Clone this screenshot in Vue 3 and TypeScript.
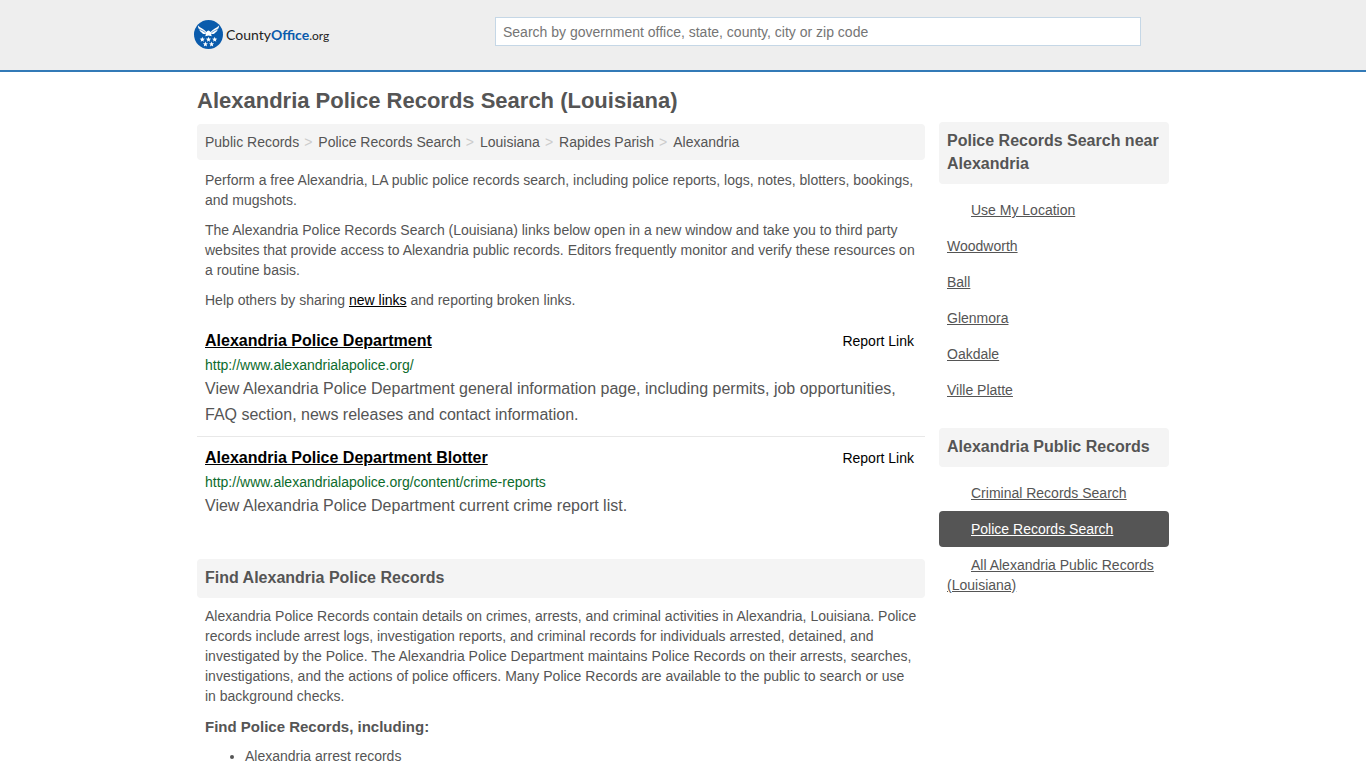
<script setup lang="ts">
interface Crumb {
  label: string
  href: string
}
interface Entry {
  title: string
  url: string
  text: string
}
interface SideLink {
  label: string
  indented?: boolean
  active?: boolean
}
interface SideBlock {
  title: string
  links: SideLink[]
}

const crumbs: Crumb[] = [
  { label: 'Public Records', href: '#public-records' },
  { label: 'Police Records Search', href: '#police-records' },
  { label: 'Louisiana', href: '#louisiana' },
  { label: 'Rapides Parish', href: '#rapides-parish' },
  { label: 'Alexandria', href: '#alexandria' },
]

const entries: Entry[] = [
  {
    title: 'Alexandria Police Department',
    url: 'http://www.alexandrialapolice.org/',
    text: 'View Alexandria Police Department general information page, including permits, job opportunities, FAQ section, news releases and contact information.',
  },
  {
    title: 'Alexandria Police Department Blotter',
    url: 'http://www.alexandrialapolice.org/content/crime-reports',
    text: 'View Alexandria Police Department current crime report list.',
  },
]

const blocks: SideBlock[] = [
  {
    title: 'Police Records Search near Alexandria',
    links: [
      { label: 'Use My Location', indented: true },
      { label: 'Woodworth' },
      { label: 'Ball' },
      { label: 'Glenmora' },
      { label: 'Oakdale' },
      { label: 'Ville Platte' },
    ],
  },
  {
    title: 'Alexandria Public Records',
    links: [
      { label: 'Criminal Records Search', indented: true },
      { label: 'Police Records Search', indented: true, active: true },
      { label: 'All Alexandria Public Records (Louisiana)', indented: true },
    ],
  },
]

const stars: [number, number][] = [
  [8.3, 19.5],
  [14.5, 19.5],
  [20.7, 19.5],
  [11.4, 24.2],
  [17.6, 24.2],
]
</script>

<template>
  <div class="page">
    <header class="top">
      <div class="wrap top-row">
        <a class="logo" href="#home" aria-label="CountyOffice.org">
          <svg class="badge" viewBox="0 0 29 29" aria-hidden="true">
            <circle cx="14.5" cy="14.5" r="14.5" fill="#0a5bac" />
            <path
              fill="#fff"
              d="M4 5.4C6.4 8 9.8 8.6 12.4 12L13.3 10.9L14.6 10.5L15.8 11.2L16.6 12C19.2 8.6 22.6 8 25 5.4C25 7.4 24.4 8.6 23.6 9.4C23.4 10.8 22.6 11.6 21.8 12C21 13.4 19.8 13.9 18.6 14.1L17 14.3L17.8 16.2L14.5 15.4L11.2 16.2L12 14.3L10.4 14.1C9.2 13.9 8 13.4 7.2 12C6.4 11.6 5.6 10.8 5.4 9.4C4.6 8.6 4 7.4 4 5.4Z"
            />
            <path
              d="M5 9C7.6 10.6 9.6 10.8 11.8 13.2M24 9C21.4 10.6 19.4 10.8 17.2 13.2"
              fill="none"
              stroke="#0a5bac"
              stroke-width="0.6"
            />
            <g fill="#fff">
              <path
                v-for="([x, y], i) in stars"
                :key="i"
                :transform="`translate(${x} ${y})`"
                d="M0 -2.7L0.7 -0.9L2.6 -0.8L1.1 0.4L1.6 2.2L0 1.2L-1.6 2.2L-1.1 0.4L-2.6 -0.8L-0.7 -0.9Z"
              />
            </g>
          </svg>
          <span class="name">County<b>Office</b><span class="tld">.org</span></span>
        </a>
        <form class="search" role="search" @submit.prevent>
          <input
            type="text"
            aria-label="Search"
            placeholder="Search by government office, state, county, city or zip code"
          />
        </form>
      </div>
    </header>

    <div class="wrap columns">
      <main class="main">
        <h1>Alexandria Police Records Search (Louisiana)</h1>
        <nav class="crumbs" aria-label="Breadcrumb">
          <ol>
            <li v-for="c in crumbs" :key="c.label"><a :href="c.href">{{ c.label }}</a></li>
          </ol>
        </nav>

        <section class="copy">
          <p>Perform a free Alexandria, LA public police records search, including police reports, logs, notes, blotters, bookings, and mugshots.</p>
          <p>The Alexandria Police Records Search (Louisiana) links below open in a new window and take you to third party websites that provide access to Alexandria public records. Editors frequently monitor and verify these resources on a routine basis.</p>
          <p>Help others by sharing <a href="#new">new links</a> and reporting broken links.</p>
        </section>

        <section class="entries">
          <article v-for="e in entries" :key="e.title" class="entry">
            <div class="entry-head">
              <a class="entry-title" :href="e.url">{{ e.title }}</a>
              <a class="report" href="#report">Report Link</a>
            </div>
            <div class="url">{{ e.url }}</div>
            <p class="desc">{{ e.text }}</p>
          </article>
        </section>

        <section>
          <h2 class="bar">Find Alexandria Police Records</h2>
          <div class="copy about">
            <p>Alexandria Police Records contain details on crimes, arrests, and criminal activities in Alexandria, Louisiana. Police records include arrest logs, investigation reports, and criminal records for individuals arrested, detained, and investigated by the Police. The Alexandria Police Department maintains Police Records on their arrests, searches, investigations, and the actions of police officers. Many Police Records are available to the public to search or use in background checks.</p>
            <h3>Find Police Records, including:</h3>
            <ul>
              <li>Alexandria arrest records</li>
            </ul>
          </div>
        </section>
      </main>

      <aside class="side">
        <section v-for="b in blocks" :key="b.title">
          <h2 class="bar">{{ b.title }}</h2>
          <ul>
            <li v-for="l in b.links" :key="l.label" :class="{ indented: l.indented, active: l.active }">
              <a href="#link">{{ l.label }}</a>
            </li>
          </ul>
        </section>
      </aside>
    </div>
  </div>
</template>

<style>
body {
  margin: 0;
  background: #fff;
}
</style>

<style scoped>
.page {
  font: 14px/20px 'Liberation Sans', Arial, sans-serif;
  color: #555;
}
.wrap {
  box-sizing: border-box;
  max-width: 972px;
  margin: 0 auto;
}
h1,
h2,
h3,
p,
ul,
ol {
  margin: 0;
  padding: 0;
}
.top {
  background: #eee;
  border-bottom: 2px solid #337ab7;
}
.top-row {
  display: flex;
  align-items: flex-start;
  justify-content: space-between;
  height: 70px;
}
.logo {
  display: flex;
  align-items: center;
  gap: 3px;
  margin: 20px 0 0 -3px;
  color: #222;
  text-decoration: none;
}
.badge {
  width: 29px;
  height: 29px;
}
.name {
  padding-top: 2px;
  font: 14px/20px Lato, sans-serif;
}
.name b {
  color: #0a5bac;
}
.tld {
  font-size: 12px;
}
.search {
  width: 646px;
  margin: 17px 28px 0 0;
}
.search input {
  box-sizing: border-box;
  display: block;
  width: 100%;
  height: 29px;
  padding: 0 7px;
  border: 1px solid #c5d7e6;
  border-radius: 0;
  font: 14px/20px 'Liberation Sans', Arial, sans-serif;
}
.search input::placeholder {
  color: #757575;
}
.columns {
  display: flex;
  align-items: flex-start;
  gap: 14px;
}
.main {
  flex: 1;
  min-width: 0;
}
h1 {
  padding: 17px 0 11px;
  font-size: 22px;
  line-height: 24px;
}
.crumbs {
  padding: 8px;
  border-radius: 4px;
  background: #f4f4f4;
}
.crumbs ol {
  display: flex;
  list-style: none;
}
.crumbs a {
  color: #555;
  text-decoration: none;
}
.crumbs li + li::before {
  content: '>';
  padding: 0 6px 0 5px;
  color: #ccc;
}
.copy {
  padding: 10px 8px 0;
}
.copy p {
  margin-bottom: 10px;
}
.copy a {
  color: #000;
}
.entry {
  padding: 11px 8px 8px;
}
.entry + .entry {
  border-top: 1px solid #e8e8e8;
}
.entry-head {
  display: flex;
  justify-content: space-between;
  padding-right: 3px;
}
.entry a {
  color: #000;
}
.entry-title {
  font-size: 16px;
  font-weight: bold;
}
.entry .report {
  text-decoration: none;
}
.url {
  margin: 4px 0 1px;
  color: #0c6b2c;
}
.desc {
  font-size: 16px;
  line-height: 26px;
}
.entries {
  padding-bottom: 32px;
}
.bar {
  padding: 7px 8px 9px;
  border-radius: 4px;
  background: #f4f4f4;
  font-size: 16px;
  line-height: 23px;
}
.about {
  padding-top: 8px;
}
h3 {
  margin-bottom: 8px;
  font-size: 15px;
  line-height: 22px;
}
.about ul {
  padding-left: 40px;
}
.side {
  width: 230px;
  padding-top: 50px;
}
.side ul {
  padding: 8px 0 20px;
  list-style: none;
}
.side li {
  padding: 8px;
  border-radius: 4px;
}
.side a {
  color: #555;
}
.side .indented {
  text-indent: 24px;
}
.side .active {
  background: #555;
}
.side .active a {
  color: #fff;
}
</style>
